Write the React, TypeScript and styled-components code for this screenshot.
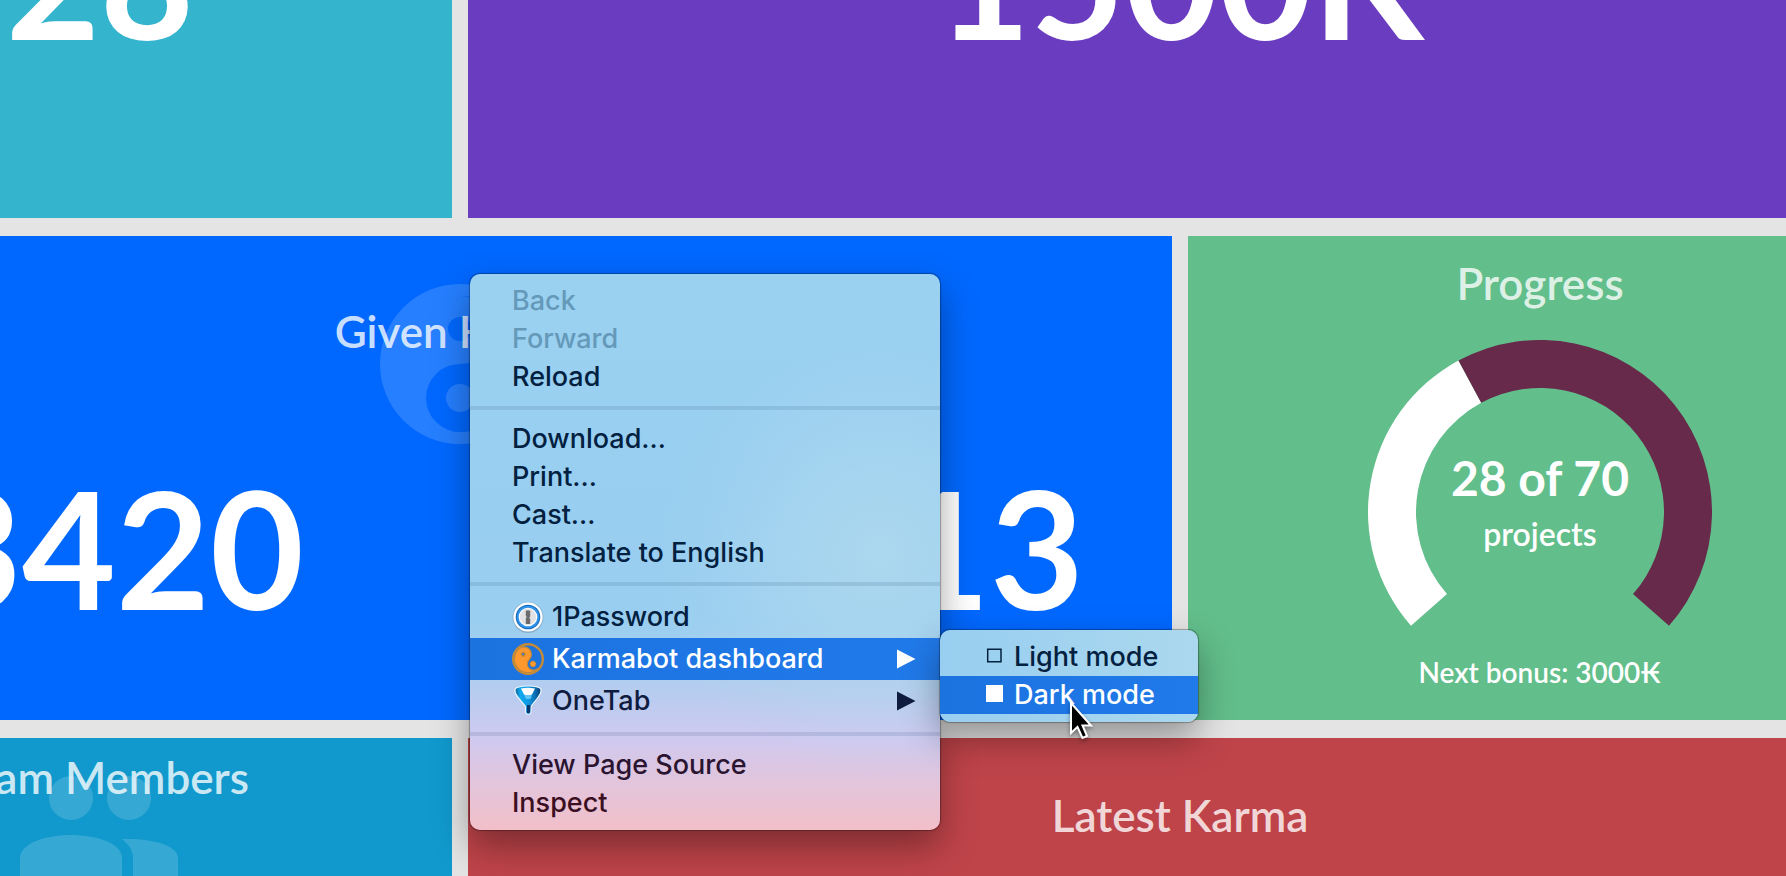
import React from "react";
import styled, { createGlobalStyle, css } from "styled-components";

const GlobalStyle = createGlobalStyle`
  * { box-sizing: border-box; }
  body {
    margin: 0;
    background: #e4e4e4;
    font-family: Lato, "Liberation Sans", sans-serif;
  }
`;

/* ---------- dashboard ---------- */

const Page = styled.div`
  position: relative;
  overflow: hidden;
  min-height: 100vh;
  background: #e4e4e4;
`;

const Board = styled.main`
  display: grid;
  grid-template-columns: repeat(3, 1fr);
  grid-template-rows: 218px 484px minmax(138px, 1fr);
  gap: 18px 16px;
  min-height: 100vh;
  width: calc(100% + 358px);
  margin-left: -252px;
`;

const Tile = styled.section<{ $color: string; $span?: number; $top?: number }>`
  position: relative;
  overflow: hidden;
  display: flex;
  flex-direction: column;
  align-items: center;
  min-width: 0;
  grid-column: span ${(p) => p.$span ?? 1};
  padding-top: ${(p) => p.$top ?? 0}px;
  background: ${(p) => p.$color};
  color: #fff;
`;

const CutTile = styled(Tile)`
  justify-content: flex-end;
  padding-bottom: 150px;
`;

const Title = styled.h2`
  position: relative;
  margin: 0;
  font-size: 44px;
  line-height: 54px;
  font-weight: 600;
  color: rgba(255, 255, 255, 0.8);
  white-space: nowrap;
`;

const Figure = styled.div`
  flex: none;
  font-size: 162px;
  line-height: 180px;
  font-weight: 700;
  white-space: nowrap;
`;

const FigureRow = styled.div`
  display: flex;
  justify-content: space-between;
  width: 100%;
  margin-top: 100px;
  padding: 0 88px 0 180px;
`;

const Watermark = styled.svg<{ $top: number }>`
  position: absolute;
  top: ${(p) => p.$top}px;
  left: 50%;
  transform: translateX(-50%);
  fill: #fff;
  opacity: 0.15;
`;

const Gauge = styled.div`
  display: grid;
  place-items: center;
  margin-top: 30px;
  > * {
    grid-area: 1 / 1;
  }
`;

const GaugeLabel = styled.div`
  display: flex;
  flex-direction: column;
  align-items: center;
  padding-top: 40px;
`;

const GaugeValue = styled.strong`
  font-size: 48px;
  line-height: 60px;
  font-weight: 700;
`;

const GaugeUnit = styled.span`
  font-size: 32px;
  line-height: 52px;
  font-weight: 600;
`;

const Bonus = styled.p`
  margin: 26px 0 0;
  font-size: 28px;
  line-height: 36px;
  font-weight: 600;
`;

/* ---------- context menu ---------- */

const menuSurface = css`
  position: absolute;
  display: flex;
  flex-direction: column;
  padding: 8px 0;
  border-radius: 10px;
  font-family: Inter, "Liberation Sans", sans-serif;
  box-shadow: 0 0 1px 1px rgba(0, 0, 0, 0.3), 0 16px 36px rgba(0, 0, 0, 0.36);
`;

const Menu = styled.div`
  ${menuSurface}
  top: 274px;
  left: 470px;
  width: 470px;
  background: radial-gradient(
      circle at 410px 280px,
      rgba(180, 220, 238, 0.7),
      rgba(180, 220, 238, 0) 220px
    ),
    linear-gradient(
      #9bd1f0 0,
      #98cef0 220px,
      #9acef0 350px,
      #b3cdef 412px,
      #cec9f0 462px,
      #e2c5dc 508px,
      #f2bfc9 556px
    );
`;

const SubMenu = styled.div`
  ${menuSurface}
  top: 630px;
  left: 940px;
  width: 258px;
  background: linear-gradient(90deg, #98cef0, #abd8ee);
`;

const Item = styled.button<{ $tall?: boolean; $active?: boolean; $tone?: string; $inset?: number }>`
  display: flex;
  align-items: center;
  width: 100%;
  height: ${(p) => (p.$tall ? 42 : 38)}px;
  padding: 0 24px 0 ${(p) => p.$inset ?? 42}px;
  border: 0;
  background: ${(p) => (p.$active ? "linear-gradient(90deg, #1b73e0, #217aea)" : "none")};
  color: ${(p) => (p.$active ? "#fff" : p.$tone ?? "#02203f")};
  font: inherit;
  font-size: 27px;
  line-height: 38px;
  font-weight: 500;
  text-align: left;
  white-space: nowrap;
  &:disabled {
    color: #6599b9;
  }
`;

const ItemIcon = styled.svg`
  flex: none;
  margin-right: 8px;
`;

const Arrow = styled.svg`
  margin-left: auto;
  fill: currentColor;
`;

const Separator = styled.hr`
  width: 100%;
  height: 4px;
  margin: 10px 0;
  border: 0;
  background: rgba(40, 80, 120, 0.14);
`;

const Pointer = styled.svg`
  position: absolute;
  top: 700px;
  left: 1067px;
  filter: drop-shadow(0 2px 2px rgba(0, 0, 0, 0.4));
`;

const polar = (r: number, deg: number) => {
  const a = (deg * Math.PI) / 180;
  return `${172 + r * Math.sin(a)} ${172 - r * Math.cos(a)}`;
};

const arc = (from: number, to: number) => {
  const large = to - from > 180 ? 1 : 0;
  return `M${polar(172, from)} A172 172 0 ${large} 1 ${polar(172, to)} L${polar(
    124,
    to
  )} A124 124 0 ${large} 0 ${polar(124, from)} Z`;
};

const YIN =
  "M0-80A80 80 0 1 1 0 80A80 80 0 1 1 0-80ZM0-68A34 34 0 0 1 0 0A34 34 0 0 0 0 68A68 68 0 0 0 0-68ZM0-47A12 12 0 1 0 0-23A12 12 0 1 0 0-47Z";

const SubArrow = () => (
  <Arrow width="19" height="20" viewBox="0 0 19 20" aria-hidden="true">
    <path d="M0 0.500L18.500 10L0 19.500Z" />
  </Arrow>
);

const OnePasswordIcon = () => (
  <ItemIcon width="32" height="32" viewBox="0 0 32 32" aria-hidden="true">
    <circle cx="16" cy="16.500" r="15.400" fill="#7f9bb0" opacity="0.6" />
    <circle cx="16" cy="16" r="14.600" fill="#fff" />
    <circle cx="16" cy="16" r="12.300" fill="#1769b5" />
    <circle cx="16" cy="16" r="11.300" fill="#2f93ea" />
    <circle cx="16" cy="16" r="9.300" fill="#fff" />
    <circle cx="16" cy="16" r="8.200" fill="#e2e2e4" />
    <path d="M13.800 9.500h4.400v6l-1 1.200 1 1.200v5h-4.400v-5.600l1-1.200-1-1.200Z" fill="#6b6b6e" />
  </ItemIcon>
);

const KarmabotIcon = () => (
  <ItemIcon width="32" height="32" viewBox="-80 -80 160 160" aria-hidden="true">
    <g transform="rotate(-45)">
      <circle r="80" fill="#c58a38" />
      <circle r="68" fill="#1d73dd" />
      <path d="M0-68A37 37 0 0 1 4 6A31 31 0 0 0 0 68A68 68 0 0 1 0-68Z" fill="#ff992d" stroke="#c58a38" strokeWidth="6" />
      <circle cy="-34" r="9" fill="#1d73dd" stroke="#c58a38" strokeWidth="8" />
      <circle cy="35" r="14" fill="#ff992d" stroke="#c58a38" strokeWidth="4" />
    </g>
  </ItemIcon>
);

const OneTabIcon = () => (
  <ItemIcon width="32" height="32" viewBox="0 0 32 32" aria-hidden="true">
    <defs>
      <linearGradient id="cone" x1="0" x2="1" y1="0" y2="0">
        <stop offset="0" stopColor="#0b5f9c" />
        <stop offset="0.2" stopColor="#10a9ee" />
        <stop offset="0.5" stopColor="#0f9ae4" />
        <stop offset="0.75" stopColor="#0a74bb" />
        <stop offset="1" stopColor="#073b70" />
      </linearGradient>
    </defs>
    <path
      d="M3 5C3 2 9 1 16 1S29 2 29 5C29.300 8 27.500 10.500 25.500 13L19 21.500V27.500Q18 29.500 16.300 29.500T13.500 27.500V21.500L6.500 13C4.500 10.500 2.700 8 3 5Z"
      fill="url(#cone)"
      stroke="#e9f3fb"
      strokeWidth="1.200"
    />
    <path d="M9 3.500Q16 2 23 3.500L20 9.500Q16 11.500 12 9.500Z" fill="#fff" />
    <path d="M12 9.500Q16 11.500 20 9.500L18.500 14H14Z" fill="#5ec6f6" />
    <path d="M15 20H18.500L18 27.500Q16.500 29 14.800 27.500Z" fill="#06396e" />
  </ItemIcon>
);

const BoxIcon = ({ filled }: { filled?: boolean }) => (
  <ItemIcon width="20" height="20" viewBox="0 0 20 20" aria-hidden="true">
    {filled ? (
      <path d="M0 0H17V17H0Z" fill="#fff" />
    ) : (
      <path d="M1.700 2.200H15V14.800H1.700Z" fill="none" stroke="#02203f" strokeWidth="1.500" />
    )}
  </ItemIcon>
);

export default function App() {
  return (
    <Page>
      <GlobalStyle />
      <Board>
        <CutTile $color="#35b4cd">
          <Figure>28</Figure>
        </CutTile>
        <CutTile $color="#6a3dc0" $span={2}>
          <Figure>1500K</Figure>
        </CutTile>

        <Tile $color="#0068ff" $span={2} $top={68}>
          <Watermark $top={48} width="160" height="160" viewBox="-80 -80 160 160" aria-hidden="true">
            <path d={YIN} fillRule="evenodd" />
            <circle cy="34" r="14" />
          </Watermark>
          <Title>Given Karma</Title>
          <FigureRow>
            <Figure>3420</Figure>
            <Figure>13</Figure>
          </FigureRow>
        </Tile>
        <Tile $color="#62be8b" $top={20}>
          <Title>Progress</Title>
          <Gauge>
            <svg width="344" height="288" viewBox="0 0 344 288" aria-hidden="true">
              <path d={arc(-131.4, -28.3)} fill="#fff" />
              <path d={arc(-28.3, 131.4)} fill="#672a4a" />
            </svg>
            <GaugeLabel>
              <GaugeValue>28 of 70</GaugeValue>
              <GaugeUnit>projects</GaugeUnit>
            </GaugeLabel>
          </Gauge>
          <Bonus>Next bonus: 3000₭</Bonus>
        </Tile>

        <Tile $color="#1199cd" $top={12}>
          <Watermark $top={38} width="160" height="100" viewBox="0 0 160 100" aria-hidden="true">
            <circle cx="51" cy="22" r="22" />
            <circle cx="109" cy="22" r="22" />
            <path d="M0 100V82C0 68 24 59 51 59S102 68 102 82V100Z" />
            <path d="M102 63C134 62 158 70 158 82V100H113V82C113 74 109 69 102 63Z" />
          </Watermark>
          <Title>Team Members</Title>
        </Tile>
        <Tile $color="#bf444a" $span={2} $top={50}>
          <Title>Latest Karma</Title>
        </Tile>
      </Board>

      <Menu role="menu" aria-label="Page">
        <Item role="menuitem" disabled>Back</Item>
        <Item role="menuitem" disabled>Forward</Item>
        <Item role="menuitem">Reload</Item>
        <Separator />
        <Item role="menuitem">Download...</Item>
        <Item role="menuitem">Print...</Item>
        <Item role="menuitem">Cast...</Item>
        <Item role="menuitem">Translate to English</Item>
        <Separator />
        <Item role="menuitem" $tall>
          <OnePasswordIcon />
          1Password
        </Item>
        <Item role="menuitem" $tall $active aria-haspopup="menu" aria-expanded="true">
          <KarmabotIcon />
          Karmabot dashboard
          <SubArrow />
        </Item>
        <Item role="menuitem" $tall $tone="#0f1c40" aria-haspopup="menu">
          <OneTabIcon />
          OneTab
          <SubArrow />
        </Item>
        <Separator />
        <Item role="menuitem" $tone="#2a1430">View Page Source</Item>
        <Item role="menuitem" $tone="#3a0f22">Inspect</Item>
      </Menu>

      <SubMenu role="menu" aria-label="Karmabot dashboard">
        <Item role="menuitem" $inset={46}>
          <BoxIcon />
          Light mode
        </Item>
        <Item role="menuitem" $inset={46} $active>
          <BoxIcon filled />
          Dark mode
        </Item>
      </SubMenu>

      <Pointer width="28" height="42" viewBox="0 0 28 42" aria-hidden="true">
        <path
          d="M4 3V33L10.500 27L15.500 38L20 36L15.500 25.500H24Z"
          fill="#000"
          stroke="#fff"
          strokeWidth="2"
        />
      </Pointer>
    </Page>
  );
}
